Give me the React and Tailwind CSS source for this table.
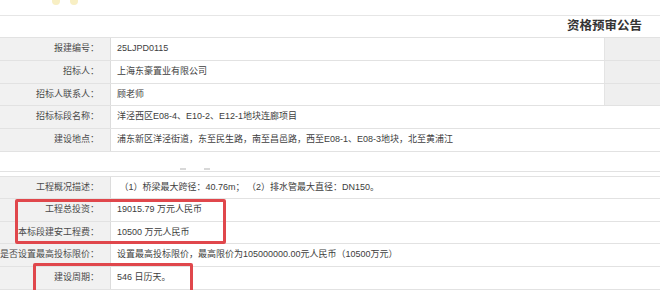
const topRows = [
  { label: '报建编号：', value: '25LJPD0115', side: true, h: 'h-[23px]' },
  { label: '招标人：', value: '上海东豪置业有限公司', side: true, h: 'h-[23px]' },
  { label: '招标人联系人：', value: '顾老师', side: true, h: 'h-[22px]' },
  { label: '招标标段名称：', value: '洋泾西区E08-4、E10-2、E12-1地块连廊项目', h: 'h-[23px]' },
  { label: '建设地点：', value: '浦东新区洋泾街道，东至民生路，南至昌邑路，西至E08-1、E08-3地块，北至黄浦江', h: 'h-[23px]' },
];

const bottomRows = [
  { label: '工程概况描述：', value: ' （1）桥梁最大跨径：40.76m； （2）排水管最大直径：DN150。', h: 'h-[22px]' },
  { label: '工程总投资：', value: '19015.79 万元人民币', h: 'h-[23px]' },
  { label: '本标段建安工程费：', value: '10500 万元人民币', h: 'h-[22px]' },
  { label: '是否设置最高投标限价：', value: '设置最高投标限价，最高限价为105000000.00元人民币（10500万元）', h: 'h-[23px]' },
  { label: '建设周期：', value: '546 日历天。', h: 'h-[23px]' },
];

function Row({ row }) {
  return (
    <div className={`flex border-b border-[#e2e2e2] ${row.h}`}>
      <div className="flex w-[111px] shrink-0 items-center justify-end border-r border-[#dcdcdc] bg-[#f1f1f1] pr-[11px] text-[#4a4a4a]">
        <span className="whitespace-nowrap">{row.label}</span>
      </div>
      <div className="flex flex-1 items-center whitespace-pre pl-[6px] text-[#3d3d3d]">
        {row.value}
      </div>
      {row.side && <div className="w-[56px] shrink-0 border-l border-[#e4e4e4] bg-[#efefef]" />}
    </div>
  );
}

export default function App() {
  return (
    <div
      className="relative h-[290px] w-[660px] overflow-hidden bg-white text-[9px]"
      style={{ fontFamily: '"Liberation Sans", "Noto Sans CJK SC", sans-serif' }}
    >
      {/* faint marks above the header line */}
      <div className="flex h-[16px] gap-[10px] border-b border-[#e6e6e6] pl-[52px]">
        <div className="h-[5px] w-[8px] rounded-b-full bg-[#f8efc4]" />
        <div className="h-[5px] w-[8px] rounded-b-full bg-[#f8efc4]" />
      </div>

      <div className="flex h-[22px] items-center justify-end border-b border-[#e2e2e2] pr-[18px]">
        <span className="text-[12.5px] font-bold text-[#333]">资格预审公告</span>
      </div>

      <div>
        {topRows.map((r) => (
          <Row key={r.label} row={r} />
        ))}
      </div>

      <div className="flex h-[20px] items-end gap-[18px] border-b border-[#e2e2e2] pl-[180px]">
        <div className="mb-[1px] h-[2px] w-[6px] bg-[#d8d8d8]" />
        <div className="mb-[1px] h-[2px] w-[6px] bg-[#d8d8d8]" />
      </div>
      <div className="h-[5px] border-b border-[#e2e2e2]" />

      <div>
        {bottomRows.map((r) => (
          <Row key={r.label} row={r} />
        ))}
      </div>

      {/* red highlight boxes */}
      <div className="absolute left-[15px] top-[199px] h-[45px] w-[211px] rounded-[2px] border-[3px] border-[#e0474c]" />
      <div className="absolute left-[33px] top-[263px] h-[32px] w-[160px] rounded-[2px] border-[3px] border-[#e0474c]" />
    </div>
  );
}
